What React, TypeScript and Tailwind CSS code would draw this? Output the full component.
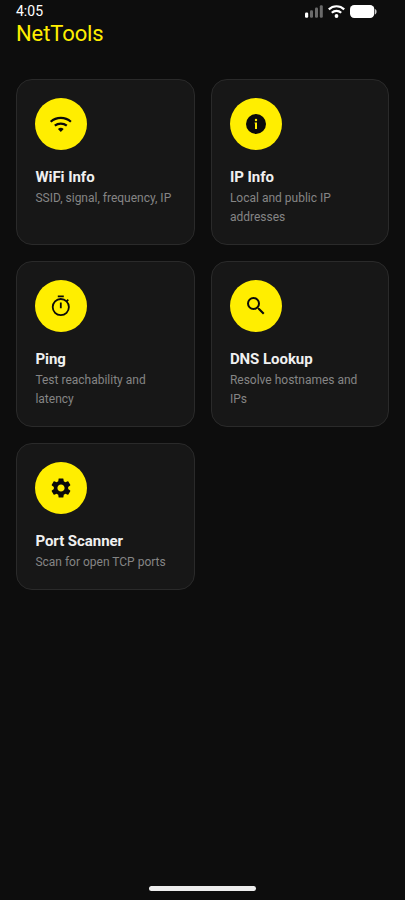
import type { ReactNode } from "react";
import { MdSearch, MdSettings } from "react-icons/md";

type Tool = { title: string; text: string; icon: ReactNode };

function WifiIcon() {
  return (
    <svg width="24" height="24" viewBox="0 0 24 24" fill="none" stroke="currentColor" strokeWidth="2.2">
      <path d="M1.7 9.8a15 15 0 0 1 20.2 0" />
      <path d="M5.8 13.7a9.4 9.4 0 0 1 12 0" />
      <path d="M11.800 19.900l-2.900-2.900a4.300 4.300 0 0 1 5.800 0z" fill="currentColor" stroke="none" />
    </svg>
  );
}

function InfoIcon() {
  return (
    <svg width="24" height="24" viewBox="0 0 24 24" fill="none">
      <circle cx="12" cy="12" r="10" fill="currentColor" />
      <circle cx="12" cy="8" r="1.200" fill="#ffee00" />
      <path d="M10.600 10.500h2.400v6.500h-2v-5.400h-.4z" fill="#ffee00" />
    </svg>
  );
}

function StopwatchIcon() {
  return (
    <svg width="24" height="24" viewBox="0 0 24 24" fill="none" stroke="currentColor" strokeWidth="1.800">
      <circle cx="11.800" cy="13.100" r="8.100" />
      <path d="M8.800 2.300h6M11.800 8.500v5.700M17.500 7.400l1.800-1.800" />
    </svg>
  );
}

const tools: Tool[] = [
  { title: "WiFi Info", text: "SSID, signal, frequency, IP", icon: <WifiIcon /> },
  { title: "IP Info", text: "Local and public IP addresses", icon: <InfoIcon /> },
  { title: "Ping", text: "Test reachability and latency", icon: <StopwatchIcon /> },
  { title: "DNS Lookup", text: "Resolve hostnames and IPs", icon: <MdSearch size={24} /> },
  { title: "Port Scanner", text: "Scan for open TCP ports", icon: <MdSettings size={24} /> },
];

function StatusBar() {
  return (
    <div className="flex h-[22px] items-center justify-between pr-[28px] pl-[16px]">
      <span className="text-[14px] leading-[22px] text-white">4:05</span>
      <svg width="73" height="16" viewBox="0 0 73 16" fill="none">
        <rect x="1" y="9.500" width="3.200" height="5.300" rx="1.200" fill="#fff" />
        <rect x="6" y="7.200" width="3" height="7.600" rx="1.200" fill="#6a6a6a" />
        <rect x="11" y="4.600" width="3" height="10.200" rx="1.200" fill="#6a6a6a" />
        <rect x="15.800" y="2.200" width="3" height="12.600" rx="1.200" fill="#6a6a6a" />
        <path d="M24.800 6.400a11 11 0 0 1 15.400 0M27.800 9.800a6.800 6.800 0 0 1 9.400 0" stroke="#fff" strokeWidth="2.200" />
        <circle cx="32.500" cy="13" r="1.900" fill="#fff" />
        <rect x="46" y="2" width="24.300" height="13" rx="4.200" fill="#fff" />
        <path d="M71 6v5.400c1-.5 1.600-1.500 1.600-2.700S72 6.500 71 6z" fill="#ccc" />
      </svg>
    </div>
  );
}

function ToolCard({ title, text, icon }: Tool) {
  return (
    <div className="rounded-[16px] border border-[#2a2a2a] bg-[#171717] px-[18.4px] pt-[18px] pb-[17px]">
      <div className="flex size-[52px] items-center justify-center rounded-full bg-[#ffee00] text-[#0a0a0a]">
        {icon}
      </div>
      <h2 className="mt-[17px] text-[15px] leading-[20px] font-bold tracking-[-0.05px] text-[#f0f0f0]">{title}</h2>
      <p className="mt-[2px] text-[12px] leading-[19px] text-[#858585]">{text}</p>
    </div>
  );
}

export default function App() {
  return (
    <div className="flex h-[900px] w-[405px] flex-col overflow-hidden bg-[#0d0d0d] font-['Roboto',sans-serif]">
      <StatusBar />
      <h1 className="pl-[16px] text-[22px] leading-[23px] tracking-[-0.1px] text-[#ffee00]">NetTools</h1>
      <main className="mt-[34px] grid grid-cols-2 gap-4 px-4">
        {tools.map((tool) => (
          <ToolCard key={tool.title} {...tool} />
        ))}
      </main>
      <div className="mt-auto mb-[9px] h-[5px] w-[107px] self-center rounded-full bg-[#ededed]" />
    </div>
  );
}
